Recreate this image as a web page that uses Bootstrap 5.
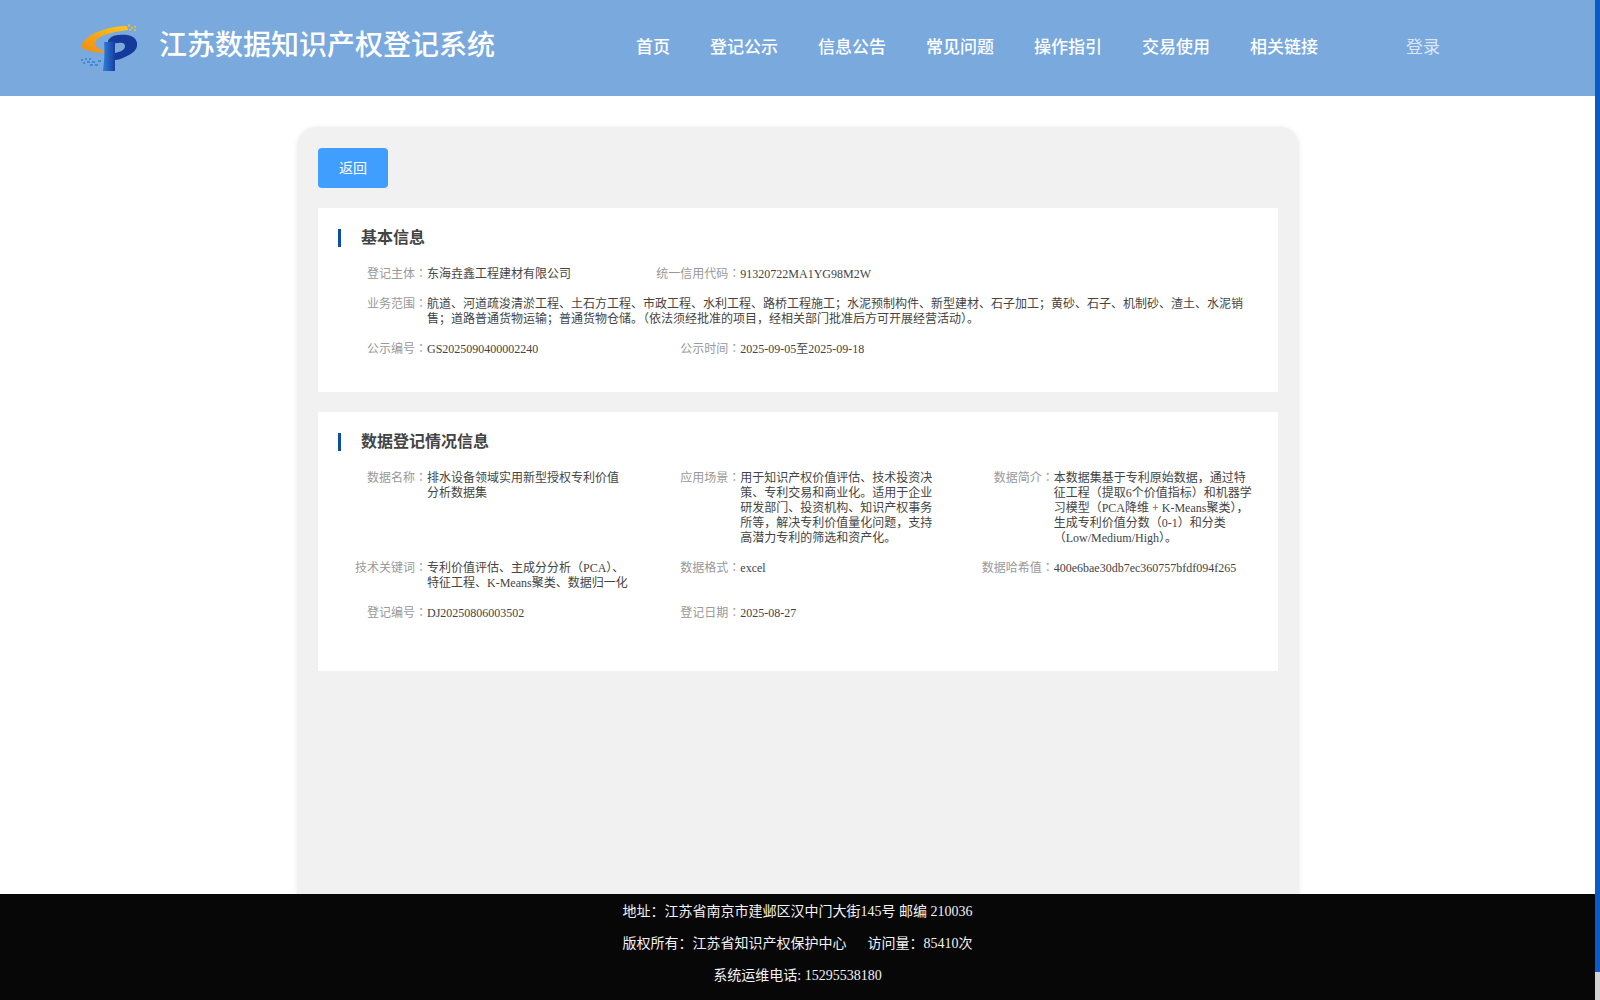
<!DOCTYPE html>
<html lang="zh-CN">
<head>
<meta charset="utf-8">
<title>江苏数据知识产权登记系统</title>
<link href="https://cdn.jsdelivr.net/npm/bootstrap@5.3.0/dist/css/bootstrap.min.css" rel="stylesheet">
<style>
html,body{height:100%;overflow:hidden}
body{font-family:"Liberation Serif","Noto Sans CJK SC",serif;background:#fff;color:#444}
.page-shell{height:1000px}
.edge-bar{flex:0 0 5px;background:#d2d2d2}
.edge-thumb{height:972px;background:#0a5bc8}
.site-head{flex:0 0 96px;background:#7aa9de;padding-left:80px;color:#fff}
.site-title{font-size:28px;font-weight:500;margin:-4px 0 0 19px;line-height:1.2}
.site-nav{margin-left:141px;gap:40px;font-size:17px;font-weight:500}
.login-link{margin-left:88px;font-size:17px;color:#dbe7f5}
.site-main{min-height:0;overflow:hidden}
.detail-sheet{width:1002px;height:900px;margin:31px 0 0 297px;padding:21px;background:#f1f1f1;border-radius:20px;box-shadow:0 0 5px rgba(0,0,0,.08)}
.back-btn{width:70px;height:40px;padding:0;border:0;border-radius:4px;background:#409eff;color:#fff;font-size:14px}
.info-panel{background:#fff;margin-top:20px;padding:21px 11px 20px 9px}
.info-panel.tall{padding-bottom:35px}
.panel-title{font-size:16px;font-weight:700;line-height:18px;color:#444;border-left:3px solid #0d4f9e;margin:0 0 20px 11px;padding-left:20px}
.info-row{font-size:12px;line-height:15px;margin-bottom:15px}
.info-label{flex:0 0 100px;text-align:right;color:#999;white-space:nowrap}
.label-colon{font-family:"Noto Sans CJK TC",sans-serif;line-height:0}
.info-value{width:203px;color:#444}
.info-value.wide{width:820px}
.site-foot{flex:0 0 106px;background:#070707;color:#f2f2f2;font-size:14px;line-height:32px;padding-top:2px;white-space:pre}
</style>
</head>
<body>
<div class="page-shell d-flex">
  <div class="flex-grow-1 d-flex flex-column" style="min-width:0">
    <header class="site-head d-flex align-items-center">
      <svg width="60" height="50" viewBox="0 0 60 50" class="flex-shrink-0" aria-label="logo">
        <defs>
          <linearGradient id="sw" x1="0" y1="1" x2="1" y2="0"><stop offset="0" stop-color="#ef8a12"/><stop offset="1" stop-color="#fbc81e"/></linearGradient>
          <linearGradient id="stem" x1="0" y1="0" x2="1" y2="0"><stop offset="0" stop-color="#2f7fdc"/><stop offset="1" stop-color="#173e9f"/></linearGradient>
        </defs>
        <path d="M47 3C30 3 12 9 4 18c-3 4-3 7 0 8 7 3 16 4 23 4l-3-2c-5-2-9-4-9-8 1-6 14-11 33-13z" fill="url(#sw)"/>
        <path fill-rule="evenodd" d="M28 18c2-4 6-6 11-6 9-1 17 1 18 8 1 7-5 11-12 14-4 2-7 3-10 3v-7c5-1 10-3 10-7 0-3-3-4-7-3-4 0-7 1-10 1z" fill="#16399c"/>
        <path d="M24 19h4l7-1v30H23c1-8 2-19 1-29z" fill="url(#stem)"/>
        <g fill="#f6c327"><rect x="45" y="3" width="2" height="2"/><rect x="48" y="1.500" width="2" height="2"/><rect x="51" y="4" width="2" height="1.500"/><rect x="54" y="3" width="2" height="1.500"/><rect x="49" y="6" width="2" height="1.500"/><rect x="54" y="6.500" width="2" height="1.500"/></g>
        <g fill="#3f8ad6"><rect x="1" y="36" width="2" height="2"/><rect x="5" y="35" width="2" height="2"/><rect x="9" y="35" width="2" height="2"/><rect x="3" y="39" width="2" height="2"/><rect x="7" y="38" width="3" height="2"/><rect x="12" y="38" width="3" height="2"/><rect x="10" y="41" width="3" height="2"/><rect x="15" y="41" width="3" height="2"/><rect x="18" y="37" width="3" height="2"/></g>
      </svg>
      <div class="site-title">江苏数据知识产权登记系统</div>
      <nav class="site-nav d-flex">
        <span>首页</span><span>登记公示</span><span>信息公告</span><span>常见问题</span><span>操作指引</span><span>交易使用</span><span>相关链接</span>
      </nav>
      <span class="login-link">登录</span>
    </header>
    <main class="site-main flex-grow-1">
      <div class="detail-sheet">
        <button type="button" class="btn back-btn d-block">返回</button>
        <section class="info-panel">
          <h2 class="panel-title">基本信息</h2>
          <div class="row g-0 info-row">
            <div class="col-4 d-flex"><div class="info-label">登记主体<span class="label-colon" lang="zh-TW">：</span></div><div class="info-value">东海垚鑫工程建材有限公司</div></div>
            <div class="col-4 d-flex"><div class="info-label">统一信用代码<span class="label-colon" lang="zh-TW">：</span></div><div class="info-value">91320722MA1YG98M2W</div></div>
          </div>
          <div class="row g-0 info-row">
            <div class="col-12 d-flex"><div class="info-label">业务范围<span class="label-colon" lang="zh-TW">：</span></div><div class="info-value wide">航道、河道疏浚清淤工程、土石方工程、市政工程、水利工程、路桥工程施工；水泥预制构件、新型建材、石子加工；黄砂、石子、机制砂、渣土、水泥销售；道路普通货物运输；普通货物仓储。（依法须经批准的项目，经相关部门批准后方可开展经营活动）。</div></div>
          </div>
          <div class="row g-0 info-row">
            <div class="col-4 d-flex"><div class="info-label">公示编号<span class="label-colon" lang="zh-TW">：</span></div><div class="info-value">GS2025090400002240</div></div>
            <div class="col-4 d-flex"><div class="info-label">公示时间<span class="label-colon" lang="zh-TW">：</span></div><div class="info-value">2025-09-05至2025-09-18</div></div>
          </div>
        </section>
        <section class="info-panel tall">
          <h2 class="panel-title">数据登记情况信息</h2>
          <div class="row g-0 info-row">
            <div class="col-4 d-flex"><div class="info-label">数据名称<span class="label-colon" lang="zh-TW">：</span></div><div class="info-value">排水设备领域实用新型授权专利价值分析数据集</div></div>
            <div class="col-4 d-flex"><div class="info-label">应用场景<span class="label-colon" lang="zh-TW">：</span></div><div class="info-value">用于知识产权价值评估、技术投资决策、专利交易和商业化。适用于企业研发部门、投资机构、知识产权事务所等，解决专利价值量化问题，支持高潜力专利的筛选和资产化。</div></div>
            <div class="col-4 d-flex"><div class="info-label">数据简介<span class="label-colon" lang="zh-TW">：</span></div><div class="info-value">本数据集基于专利原始数据，通过特征工程（提取6个价值指标）和机器学习模型（PCA降维 + K-Means聚类），生成专利价值分数（0-1）和分类（Low/Medium/High）。</div></div>
          </div>
          <div class="row g-0 info-row">
            <div class="col-4 d-flex"><div class="info-label">技术关键词<span class="label-colon" lang="zh-TW">：</span></div><div class="info-value">专利价值评估、主成分分析（PCA）、特征工程、K-Means聚类、数据归一化</div></div>
            <div class="col-4 d-flex"><div class="info-label">数据格式<span class="label-colon" lang="zh-TW">：</span></div><div class="info-value">excel</div></div>
            <div class="col-4 d-flex"><div class="info-label">数据哈希值<span class="label-colon" lang="zh-TW">：</span></div><div class="info-value">400e6bae30db7ec360757bfdf094f265</div></div>
          </div>
          <div class="row g-0 info-row">
            <div class="col-4 d-flex"><div class="info-label">登记编号<span class="label-colon" lang="zh-TW">：</span></div><div class="info-value">DJ20250806003502</div></div>
            <div class="col-4 d-flex"><div class="info-label">登记日期<span class="label-colon" lang="zh-TW">：</span></div><div class="info-value">2025-08-27</div></div>
          </div>
        </section>
      </div>
    </main>
    <footer class="site-foot text-center">地址：江苏省南京市建邺区汉中门大街145号 邮编 210036
版权所有：江苏省知识产权保护中心      访问量：85410次
系统运维电话: 15295538180</footer>
  </div>
  <div class="edge-bar"><div class="edge-thumb"></div></div>
</div>
<script src="https://cdn.jsdelivr.net/npm/bootstrap@5.3.0/dist/js/bootstrap.bundle.min.js"></script>
</body>
</html>
